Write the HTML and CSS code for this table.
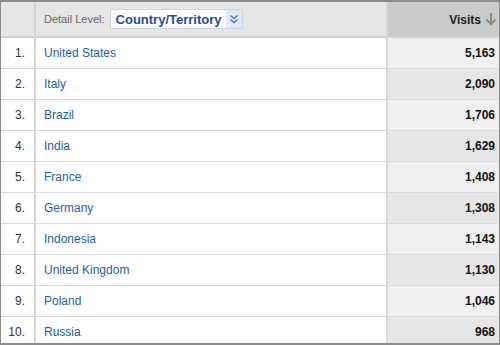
FILE: index.html
```html
<!DOCTYPE html>
<html>
<head>
<meta charset="utf-8">
<link rel="stylesheet" href="styles.css">
</head>
<body>
<div class="frame">
<table class="grid">
  <thead>
    <tr>
      <th class="idx"></th>
      <th class="name">
        <div class="detail">
          <span class="label">Detail Level:</span>
          <span class="select"><span class="value">Country/Territory</span><span class="chev"><svg width="10" height="12" viewBox="0 0 10 12"><path d="M1.5 2.5 L5 5.5 L8.5 2.5 M1.5 6.5 L5 9.5 L8.5 6.5" fill="none" stroke="#4a78b8" stroke-width="1.4"/></svg></span></span>
        </div>
      </th>
      <th class="visits"><span>Visits</span><svg class="arrow" width="12" height="14" viewBox="0 0 12 14"><path d="M6 1 V12 M1.5 7.5 L6 12 L10.5 7.5" fill="none" stroke="#8a8a8a" stroke-width="2"/></svg></th>
    </tr>
  </thead>
  <tbody>
    <tr><td class="idx">1.</td><td class="name"><a>United States</a></td><td class="visits">5,163</td></tr>
    <tr><td class="idx">2.</td><td class="name"><a>Italy</a></td><td class="visits">2,090</td></tr>
    <tr><td class="idx">3.</td><td class="name"><a>Brazil</a></td><td class="visits">1,706</td></tr>
    <tr><td class="idx">4.</td><td class="name"><a>India</a></td><td class="visits">1,629</td></tr>
    <tr><td class="idx">5.</td><td class="name"><a>France</a></td><td class="visits">1,408</td></tr>
    <tr><td class="idx">6.</td><td class="name"><a>Germany</a></td><td class="visits">1,308</td></tr>
    <tr><td class="idx">7.</td><td class="name"><a>Indonesia</a></td><td class="visits">1,143</td></tr>
    <tr><td class="idx">8.</td><td class="name"><a>United Kingdom</a></td><td class="visits">1,130</td></tr>
    <tr><td class="idx">9.</td><td class="name"><a>Poland</a></td><td class="visits">1,046</td></tr>
    <tr><td class="idx">10.</td><td class="name"><a>Russia</a></td><td class="visits">968</td></tr>
  </tbody>
</table>
</div>
</body>
</html>
```
FILE: styles.css
```css
html, body {
  margin: 0;
  padding: 0;
  background: #ffffff;
}
.frame {
  width: 500px;
  height: 345px;
  box-sizing: border-box;
  border: 1px solid #8c8c8c;
  border-top: 2px solid #8c8c8c;
  border-bottom: 2px solid #8c8c8c;
  overflow: hidden;
}
.grid {
  width: 498px;
  border-collapse: collapse;
  table-layout: fixed;
  font-family: "Liberation Sans", Arial, sans-serif;
  font-size: 12px;
}
.grid th {
  height: 35px;
  padding: 0;
  background: #e6e6e6;
  border-bottom: 2px solid #d2d2d2;
  font-weight: normal;
  box-sizing: border-box;
}
.grid td {
  height: 30px;
  padding: 0;
  border-bottom: 1px solid #dcdcdc;
}
.grid th.idx, .grid td.idx {
  width: 34px;
  border-right: 2px solid #d6d6d6;
}
.grid td.idx {
  text-align: right;
  padding-right: 9px;
  color: #333;
  box-sizing: border-box;
}
.grid th.visits, .grid td.visits {
  width: 112px;
  border-left: 2px solid #d9d9d9;
}
.grid th.visits {
  background: #cbcbcb;
  text-align: right;
  padding-right: 2px;
  font-weight: bold;
  color: #222;
  font-size: 12px;
}
.grid th.visits span {
  vertical-align: middle;
}
.arrow {
  vertical-align: middle;
  margin-left: 4px;
}
.grid td.visits {
  background: #efefef;
  text-align: right;
  padding-right: 4px;
  font-weight: bold;
  color: #111;
  box-sizing: border-box;
}
.grid tbody tr:nth-child(even) td.visits {
  background: #e6e6e6;
}
.grid td.name {
  padding-left: 8px;
}
.grid td.name a {
  color: #1f5fa8;
  text-decoration: none;
}
.grid th.name {
  text-align: left;
  padding-left: 8px;
}
.detail {
  display: flex;
  align-items: center;
  gap: 5px;
}
.label {
  color: #666666;
  font-size: 11px;
}
.select {
  display: inline-flex;
  align-items: center;
  height: 20px;
  background: #fff;
  border: 1px solid #c9d6e6;
  box-sizing: border-box;
}
.value {
  color: #1d4d9f;
  font-weight: bold;
  font-size: 13px;
  padding: 0 5px 0 5px;
}
.chev {
  display: flex;
  align-items: center;
  justify-content: center;
  width: 16px;
  height: 18px;
  background: #dfe9f6;
}
```
